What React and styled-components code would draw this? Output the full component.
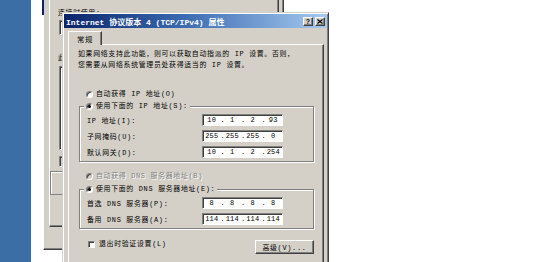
import React from "react";
import styled, { createGlobalStyle } from "styled-components";

const FONT = `"Liberation Mono", "Noto Sans CJK SC", monospace`;

const Global = createGlobalStyle`
  html, body { margin: 0; padding: 0; background: #fff; }
  body { width: 554px; height: 262px; overflow: hidden; }
`;

const Screen = styled.div`
  position: relative;
  width: 554px;
  height: 262px;
  overflow: hidden;
  display: flex;
  background: #fff;
  font-family: ${FONT};
`;

const DesktopStrip = styled.div`
  width: 31px;
  flex: none;
  background: #3a6ea5;
`;

const EdgeBar = styled.div`
  position: absolute;
  left: 42px;
  top: 0;
  width: 2px;
  height: 15px;
  background: #0a246a;
`;

/* ---------- window behind ---------- */
const BackWindow = styled.div`
  position: absolute;
  left: 43px;
  top: -30px;
  width: 241px;
  height: 280px;
  box-sizing: border-box;
  background: #d4d0c8;
  border-left: 1px solid #fff;
  border-right: 1px solid #404040;
  border-bottom: 1px solid #404040;
  box-shadow: inset -1px -1px 0 #808080;
  padding: 0 4px 0 5px;
  font-size: 6.9px;
  letter-spacing: 0.7px;
`;

const BackPanel = styled.div`
  height: 257px;
  box-sizing: border-box;
  border-left: 1px solid #fff;
  border-right: 1px solid #404040;
  border-bottom: 1px solid #404040;
  box-shadow: inset -1px -1px 0 #808080;
  padding: 38px 0 0 8px;
  display: flex;
  flex-direction: column;
`;

const BackLabel = styled.div`
  height: 10px;
  line-height: 10px;
  white-space: nowrap;
  margin-top: ${(p) => p.$mt || 0}px;
`;

const BackBox = styled.div`
  margin-left: 1px;
  margin-right: 8px;
  margin-top: ${(p) => p.$mt || 0}px;
  height: ${(p) => p.$h}px;
  box-sizing: border-box;
  background: ${(p) => (p.$white ? "#fff" : "#d4d0c8")};
  border: 1px solid;
  border-color: #808080 #fff #fff #808080;
  box-shadow: inset 1px 1px 0 #404040;
`;

const BackGroup = styled.div`
  margin-top: ${(p) => p.$mt || 0}px;
  margin-left: -8px;
  height: ${(p) => p.$h}px;
  box-sizing: border-box;
  border: 1px solid #808080;
  box-shadow: inset 1px 1px 0 #fff;
`;

/* ---------- dialog ---------- */
const Dialog = styled.div`
  position: absolute;
  left: 62px;
  top: 12px;
  width: 267px;
  height: 262px;
  box-sizing: border-box;
  background: #d4d0c8;
  border: 1px solid;
  border-color: #d4d0c8 #404040 #404040 #d4d0c8;
  box-shadow: inset 1px 1px 0 #fff, inset -1px -1px 0 #808080;
  padding: 1px;
  display: flex;
  flex-direction: column;
  font-family: ${FONT};
  font-size: 6.9px;
  letter-spacing: 0.7px;
  color: #000;
`;

const TitleBar = styled.div`
  height: 14px;
  flex: none;
  display: flex;
  align-items: center;
  padding: 0 2px 0 2px;
  background: linear-gradient(to right, #0a246a 0%, #3a6ab0 45%, #a6caf0 100%);
  color: #fff;
  font-weight: bold;
  font-size: 8px;
  letter-spacing: 0;
  white-space: nowrap;
`;

const TitleText = styled.span`
  flex: 1;
  overflow: hidden;
`;

const TitleButtons = styled.div`
  display: flex;
  gap: 2px;
`;

const TitleButton = styled.div`
  width: 10px;
  height: 9px;
  box-sizing: border-box;
  background: #d4d0c8;
  border: 1px solid;
  border-color: #fff #404040 #404040 #fff;
  box-shadow: inset -1px -1px 0 #808080;
  display: flex;
  align-items: center;
  justify-content: center;
  color: #000;
  font-family: "Liberation Sans", sans-serif;
  font-weight: bold;
  font-size: 7px;
  line-height: 7px;
`;

const Body = styled.div`
  flex: 1;
  display: flex;
  flex-direction: column;
  padding: 3px 3px 0 3px;
`;

const TabStrip = styled.div`
  display: flex;
  padding-left: 1px;
`;

const Tab = styled.div`
  position: relative;
  z-index: 1;
  width: 34px;
  height: 14px;
  box-sizing: border-box;
  margin-bottom: -1px;
  background: #d4d0c8;
  border-top: 1px solid #fff;
  border-left: 1px solid #fff;
  border-right: 1px solid #404040;
  box-shadow: inset -1px 0 0 #808080;
  display: flex;
  align-items: center;
  justify-content: center;
  padding-bottom: 1px;
  font-size: 7.4px;
`;

const Panel = styled.div`
  flex: 1;
  margin-left: 1px;
  box-sizing: border-box;
  border: 1px solid;
  border-color: #fff #404040 #404040 #fff;
  box-shadow: inset -1px 0 0 #808080;
  padding: 5px 9px 0 9px;
  display: flex;
  flex-direction: column;
`;

const Paragraph = styled.div`
  height: 20px;
  display: flex;
  flex-direction: column;
  justify-content: space-between;
`;

const Line = styled.div`
  line-height: 8.8px;
  white-space: nowrap;
`;

const OptionRow = styled.div`
  display: flex;
  align-items: center;
  gap: 3px;
  height: 10px;
  line-height: 10px;
  white-space: nowrap;
  margin-top: ${(p) => p.$mt || 0}px;
  padding-left: ${(p) => p.$pl ?? 8}px;
  color: ${(p) => (p.$disabled ? "#808080" : "#000")};
  text-shadow: ${(p) => (p.$disabled ? "1px 1px 0 #fff" : "none")};
`;

const Radio = styled.span`
  position: relative;
  width: 7px;
  height: 7px;
  flex: none;
  box-sizing: border-box;
  border-radius: 50%;
  border: 1px solid;
  border-color: #808080 #fff #fff #808080;
  background: ${(p) => (p.$disabled ? "#d4d0c8" : "#fff")};
  box-shadow: inset 1px 1px 0 #404040;

  &::after {
    content: "";
    display: ${(p) => (p.$checked ? "block" : "none")};
    position: absolute;
    left: 1px;
    top: 1px;
    width: 3px;
    height: 3px;
    border-radius: 50%;
    background: #000;
  }
`;

const GroupBox = styled.div`
  position: relative;
  margin-top: ${(p) => p.$mt}px;
  margin-left: 1px;
  box-sizing: border-box;
  border: 1px solid #808080;
  box-shadow: 1px 1px 0 #fff, inset 1px 1px 0 #fff;
  padding: 7px 0 3px 7px;
  display: flex;
  flex-direction: column;
  gap: 4px;
`;

const Legend = styled.div`
  position: absolute;
  left: 4px;
  top: -6px;
  background: #d4d0c8;
  padding-right: 2px;
`;

const FieldRow = styled.div`
  display: flex;
  align-items: center;
  height: 12px;
`;

const FieldLabel = styled.span`
  width: 115px;
  flex: none;
  white-space: nowrap;
`;

const IpField = styled.div`
  width: 81px;
  height: 12px;
  box-sizing: border-box;
  background: #fff;
  border: 1px solid;
  border-color: #808080 #fff #fff #808080;
  box-shadow: inset 1px 1px 0 #404040;
  display: flex;
  align-items: center;
  font-size: 7px;
  letter-spacing: 0.2px;
  line-height: 10px;
`;

const Octet = styled.span`
  flex: 1;
  text-align: center;
`;

const Dot = styled.span`
  width: 3px;
  text-align: center;
`;

const BottomRow = styled.div`
  margin-top: 11px;
  display: flex;
  justify-content: space-between;
  align-items: flex-start;
`;

const CheckRow = styled.div`
  display: flex;
  align-items: center;
  gap: 4px;
  padding-left: 10px;
  height: 8px;
  line-height: 8px;
  white-space: nowrap;
`;

const Check = styled.span`
  width: 7px;
  height: 7px;
  flex: none;
  box-sizing: border-box;
  background: #fff;
  border: 1px solid;
  border-color: #808080 #fff #fff #808080;
  box-shadow: inset 1px 1px 0 #404040;
`;

const Button = styled.div`
  width: 59px;
  height: 14px;
  box-sizing: border-box;
  background: #d4d0c8;
  border: 1px solid;
  border-color: #fff #404040 #404040 #fff;
  box-shadow: inset -1px -1px 0 #808080;
  display: flex;
  align-items: center;
  justify-content: center;
  white-space: nowrap;
`;

function Ip({ value }) {
  const parts = value.split(".");
  return (
    <IpField>
      {parts.map((p, i) => (
        <React.Fragment key={i}>
          {i > 0 && <Dot>.</Dot>}
          <Octet>{p}</Octet>
        </React.Fragment>
      ))}
    </IpField>
  );
}

function CloseGlyph() {
  return (
    <svg width="6" height="5" viewBox="0 0 6 5">
      <path d="M0.5 0.5 L5.5 4.5 M5.5 0.5 L0.5 4.5" stroke="#000" strokeWidth="1.2" />
    </svg>
  );
}

export default function App() {
  return (
    <>
      <Global />
      <Screen>
        <DesktopStrip />
        <BackWindow>
          <BackPanel>
            <BackLabel>连接时使用:</BackLabel>
            <BackBox $mt={2} $h={15} $white />
            <BackLabel $mt={18}>此</BackLabel>
            <BackBox $mt={3} $h={84} $white />
            <BackBox $mt={6} $h={11} />
            <BackGroup $mt={4} $h={24} />
          </BackPanel>
        </BackWindow>
        <EdgeBar />
        <Dialog>
          <TitleBar>
            <TitleText>Internet 协议版本 4 (TCP/IPv4) 属性</TitleText>
            <TitleButtons>
              <TitleButton>?</TitleButton>
              <TitleButton>
                <CloseGlyph />
              </TitleButton>
            </TitleButtons>
          </TitleBar>
          <Body>
            <TabStrip>
              <Tab>常规</Tab>
            </TabStrip>
            <Panel>
              <Paragraph>
                <Line>如果网络支持此功能，则可以获取自动指派的 IP 设置。否则，</Line>
                <Line>您需要从网络系统管理员处获得适当的 IP 设置。</Line>
              </Paragraph>

              <OptionRow $mt={19}>
                <Radio />
                自动获得 IP 地址(O)
              </OptionRow>

              <GroupBox $mt={7}>
                <Legend>
                  <OptionRow $pl={2}>
                    <Radio $checked />
                    使用下面的 IP 地址(S):
                  </OptionRow>
                </Legend>
                <FieldRow>
                  <FieldLabel>IP 地址(I):</FieldLabel>
                  <Ip value="10.1.2.93" />
                </FieldRow>
                <FieldRow>
                  <FieldLabel>子网掩码(U):</FieldLabel>
                  <Ip value="255.255.255.0" />
                </FieldRow>
                <FieldRow>
                  <FieldLabel>默认网关(D):</FieldLabel>
                  <Ip value="10.1.2.254" />
                </FieldRow>
              </GroupBox>

              <OptionRow $mt={9} $disabled>
                <Radio $disabled />
                自动获得 DNS 服务器地址(B)
              </OptionRow>

              <GroupBox $mt={8}>
                <Legend>
                  <OptionRow $pl={2}>
                    <Radio $checked />
                    使用下面的 DNS 服务器地址(E):
                  </OptionRow>
                </Legend>
                <FieldRow>
                  <FieldLabel>首选 DNS 服务器(P):</FieldLabel>
                  <Ip value="8.8.8.8" />
                </FieldRow>
                <FieldRow>
                  <FieldLabel>备用 DNS 服务器(A):</FieldLabel>
                  <Ip value="114.114.114.114" />
                </FieldRow>
              </GroupBox>

              <BottomRow>
                <CheckRow>
                  <Check />
                  退出时验证设置(L)
                </CheckRow>
                <Button>高级(V)...</Button>
              </BottomRow>
            </Panel>
          </Body>
        </Dialog>
      </Screen>
    </>
  );
}
